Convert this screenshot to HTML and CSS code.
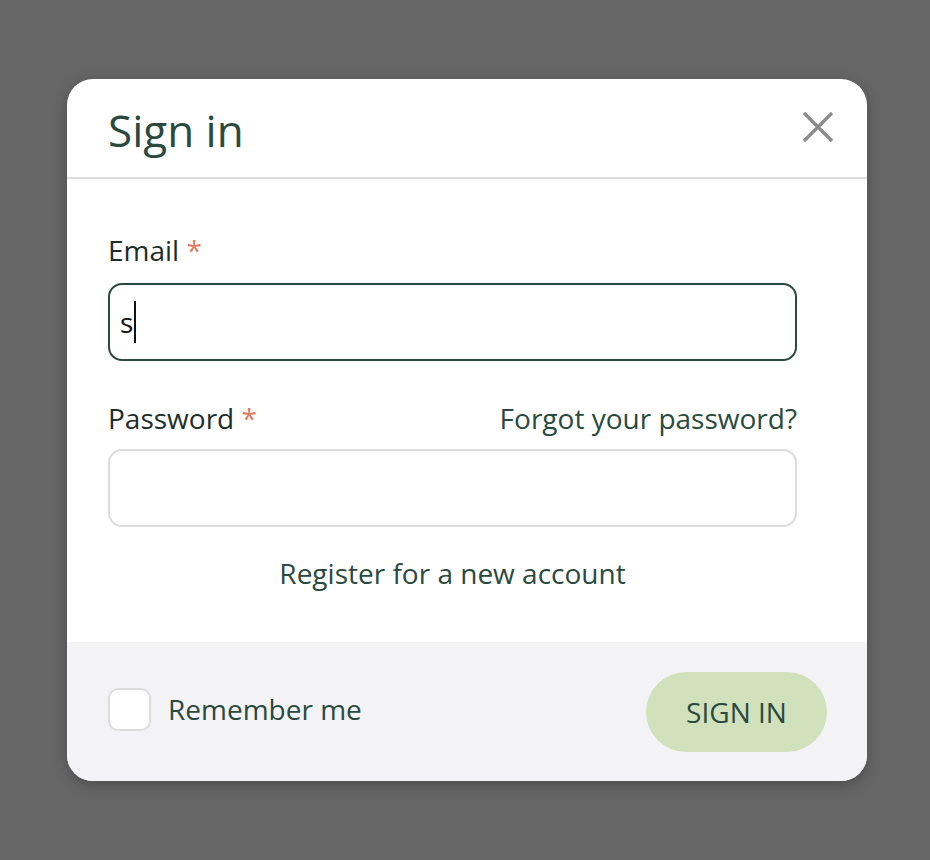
FILE: index.html
```html
<!DOCTYPE html>
<html lang="en">
<head>
<meta charset="utf-8">
<title>Sign in</title>
<link rel="stylesheet" href="styles.css">
</head>
<body>
<div class="modal">
  <div class="modal-header">
    <h1 class="title">Sign in</h1>
    <button class="close" aria-label="Close">
      <svg width="32" height="32" viewBox="0 0 32 32"><path d="M2 2 L30 30 M30 2 L2 30" stroke="#8a8a8a" stroke-width="3.2" fill="none"/></svg>
    </button>
  </div>
  <div class="modal-body">
    <div class="label">Email <span class="req">*</span></div>
    <div class="input focused"><span class="val">s</span><span class="caret"></span></div>
    <div class="label-row">
      <div class="label">Password <span class="req">*</span></div>
      <a class="link">Forgot your password?</a>
    </div>
    <input class="input" type="password">
    <div class="register"><a class="link">Register for a new account</a></div>
  </div>
  <div class="modal-footer">
    <label class="remember"><span class="check"></span><span>Remember me</span></label>
    <button class="btn">SIGN IN</button>
  </div>
</div>
</body>
</html>
```
FILE: styles.css
```css
html, body {
  margin: 0;
  background: #666666;
  font-family: "Open Sans", "Noto Sans", sans-serif;
}
body {
  padding: 79px 0 0 67px;
  height: 860px;
  box-sizing: border-box;
}
.modal {
  width: 800px;
  background: #fff;
  border-radius: 26px;
  overflow: hidden;
  box-shadow: 0 4px 14px rgba(0,0,0,0.25);
}
.modal-header {
  height: 100px;
  box-sizing: border-box;
  padding: 0 33px 0 41px;
  display: flex;
  align-items: center;
  justify-content: space-between;
  border-bottom: 2px solid #dcdcdc;
}
.title {
  margin: 0;
  font-size: 44px;
  font-weight: 400;
  color: #2a4a3f;
  line-height: 1;
  padding-top: 4px;
}
.close {
  background: none;
  border: 0;
  padding: 0;
  width: 32px;
  height: 32px;
  display: flex;
  margin-top: -2px;
}
.modal-body {
  padding: 54px 70px 47px 41px;
}
.label {
  font-size: 28px;
  line-height: 34px;
  color: #1e2e29;
}
.modal-body > .label {
  margin-bottom: 16px;
}
.req {
  color: #e07a5f;
}
.input {
  display: flex;
  align-items: center;
  width: 100%;
  height: 78px;
  box-sizing: border-box;
  border: 2px solid #dcdcdc;
  border-radius: 14px;
  padding: 0 10px;
  font-family: inherit;
  font-size: 28px;
  color: #111;
  background: #fff;
  outline: none;
}
.input.focused {
  border-color: #2a4a3f;
}
.val {
  line-height: 1;
}
.caret {
  width: 2px;
  height: 42px;
  background: #111;
  margin-left: 1px;
}
.label-row {
  display: flex;
  justify-content: space-between;
  align-items: center;
  margin: 40px 0 14px;
}
.link {
  font-size: 28px;
  line-height: 34px;
  color: #2a4a3f;
  text-decoration: none;
}
.register {
  text-align: center;
  margin-top: 29px;
  line-height: 34px;
}
.modal-footer {
  height: 139px;
  box-sizing: border-box;
  background: #f3f3f5;
  padding: 0 40px 0 41px;
  display: flex;
  align-items: center;
  justify-content: space-between;
}
.remember {
  display: flex;
  align-items: center;
  gap: 17px;
  font-size: 28px;
  color: #2a4a3f;
  margin-top: -5px;
}
.check {
  width: 43px;
  height: 43px;
  box-sizing: border-box;
  border: 2px solid #dcdcdc;
  border-radius: 10px;
  background: #fff;
}
.btn {
  width: 181px;
  height: 80px;
  border: 0;
  border-radius: 40px;
  background: #d1e1bc;
  color: #2a4a3f;
  font-family: inherit;
  font-size: 28px;
  padding: 0;
}
```
